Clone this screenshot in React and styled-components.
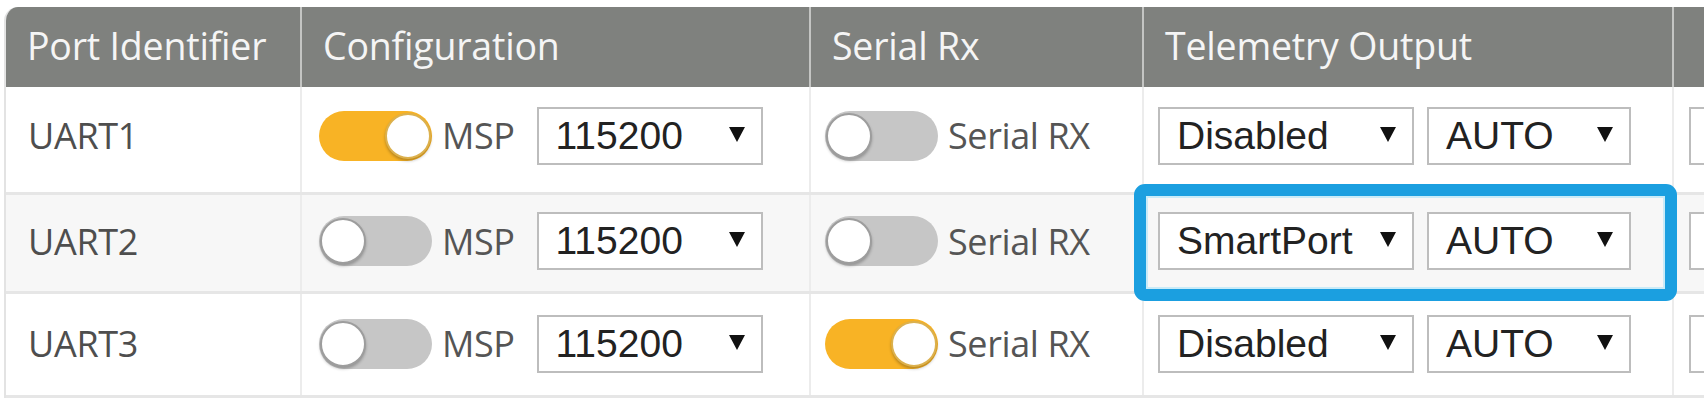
import React from "react";
import styled, { createGlobalStyle } from "styled-components";

const GlobalStyle = createGlobalStyle`
  html, body { margin: 0; padding: 0; background: #ffffff; }
  * { box-sizing: border-box; }
`;

const COLS = "296px 509px 333px 530px 1fr";

const Frame = styled.div`
  position: relative;
  width: 1704px;
  height: 410px;
  overflow: hidden;
  padding: 7px 0 0 4px;
  background: #fff;
`;

const Table = styled.div`
  width: 1780px;
  border-left: 2px solid #e3e3e3;
  border-top-left-radius: 14px;
  overflow: hidden;
  font-family: "Open Sans", "Noto Sans", sans-serif;
`;

const HeaderRow = styled.div`
  display: grid;
  grid-template-columns: ${COLS};
  height: 80px;
  background: #7f817e;
  color: #f5f5f5;
`;

const HeaderCell = styled.div`
  display: flex;
  align-items: center;
  padding: 0 0 4px 21px;
  font-size: 37.5px;
  font-weight: 400;
  letter-spacing: -0.2px;
  border-right: 2px solid #c4c5c3;
  white-space: nowrap;
`;

const BodyRow = styled.div`
  display: grid;
  grid-template-columns: ${COLS};
  height: ${(p) => p.$h}px;
  background: ${(p) => (p.$shade ? "#f7f7f7" : "#ffffff")};
  border-bottom: 3px solid #e6e6e6;
`;

const Cell = styled.div`
  display: flex;
  align-items: center;
  padding: 0 0 ${(p) => p.$pb}px ${(p) => p.$pad || 16}px;
  border-right: 2px solid #ececec;
  gap: ${(p) => p.$gap || 0}px;
  white-space: nowrap;
  color: #525252;
  font-size: 36px;
`;

const PortName = styled.span`
  color: #4e4e4e;
  letter-spacing: -0.3px;
`;

const Track = styled.span`
  position: relative;
  display: inline-block;
  flex: none;
  width: 113px;
  height: 50px;
  border-radius: 25px;
  background: ${(p) => (p.$on ? "#f8b325" : "#c6c6c6")};
`;

const Knob = styled.span`
  position: absolute;
  top: 2px;
  left: ${(p) => (p.$on ? "66px" : "1px")};
  width: 46px;
  height: 46px;
  border-radius: 50%;
  background: #ffffff;
  border: 2px solid ${(p) => (p.$on ? "#dcb14e" : "#9d9d9d")};
  box-shadow: 0 2px 3px rgba(0, 0, 0, 0.25);
`;

const Label = styled.span`
  color: #555555;
  margin-left: ${(p) => p.$ml || 10}px;
  margin-right: ${(p) => p.$mr || 0}px;
  letter-spacing: -0.4px;
`;

const SelectBox = styled.div`
  display: flex;
  align-items: center;
  justify-content: space-between;
  flex: none;
  width: ${(p) => p.$w}px;
  height: 58px;
  padding: 0 16px 0 17px;
  background: #ffffff;
  border: 2px solid #bdbdbd;
  font-family: "Liberation Sans", Arial, sans-serif;
  font-size: 39px;
  color: #222222;
`;

const Arrow = styled.span`
  width: 0;
  height: 0;
  flex: none;
  margin-bottom: 3px;
  border-left: 8px solid transparent;
  border-right: 8px solid transparent;
  border-top: 15px solid #111111;
`;

const Highlight = styled.div`
  position: absolute;
  left: 1134px;
  top: 184px;
  width: 543px;
  height: 117px;
  border: 12px solid #1b9fe0;
  border-radius: 11px;
  box-shadow: inset 0 0 0 2px #c9ebf8;
  pointer-events: none;
`;

const Toggle = ({ on }) => (
  <Track $on={on}>
    <Knob $on={on} />
  </Track>
);

const Select = ({ value, w }) => (
  <SelectBox $w={w}>
    <span>{value}</span>
    <Arrow />
  </SelectBox>
);

const rows = [
  { port: "UART1", msp: true, rx: false, tel: "Disabled", h: 108, pb: 8 },
  { port: "UART2", msp: false, rx: false, tel: "SmartPort", h: 99, pb: 4 },
  { port: "UART3", msp: false, rx: true, tel: "Disabled", h: 104, pb: 2 },
];

export default function App() {
  return (
    <>
      <GlobalStyle />
      <Frame>
        <Table>
          <HeaderRow>
            <HeaderCell>Port Identifier</HeaderCell>
            <HeaderCell>Configuration</HeaderCell>
            <HeaderCell>Serial Rx</HeaderCell>
            <HeaderCell>Telemetry Output</HeaderCell>
            <HeaderCell />
          </HeaderRow>
          {rows.map((r, i) => (
            <BodyRow key={r.port} $shade={i === 1} $h={r.h}>
              <Cell $pad={22} $pb={r.pb}>
                <PortName>{r.port}</PortName>
              </Cell>
              <Cell $pad={17} $pb={r.pb}>
                <Toggle on={r.msp} />
                <Label $ml={10} $mr={22}>MSP</Label>
                <Select value="115200" w={226} />
              </Cell>
              <Cell $pad={14} $pb={r.pb}>
                <Toggle on={r.rx} />
                <Label $ml={10}>Serial RX</Label>
              </Cell>
              <Cell $pad={14} $gap={13} $pb={r.pb}>
                <Select value={r.tel} w={256} />
                <Select value="AUTO" w={204} />
              </Cell>
              <Cell $pad={15} $pb={r.pb}>
                <SelectBox $w={204} />
              </Cell>
            </BodyRow>
          ))}
        </Table>
        <Highlight />
      </Frame>
    </>
  );
}
